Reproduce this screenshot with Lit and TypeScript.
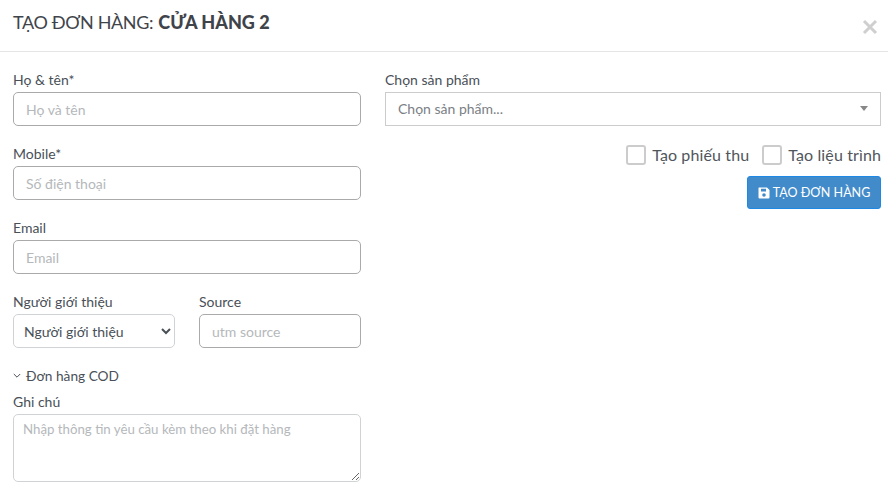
import { LitElement, html, css } from "lit";
import { customElement } from "lit/decorators.js";

@customElement("app-root")
export class AppRoot extends LitElement {
  static styles = css`
    :host {
      display: block;
      width: 888px;
      height: 495px;
      overflow: hidden;
      background: #fff;
      color: #495057;
      font-family: "Lato", "Open Sans", sans-serif;
      font-size: 14px;
    }
    * { box-sizing: border-box; }
    .header {
      height: 52px;
      border-bottom: 1px solid #e5e5e5;
      padding: 10px 10px 0 13px;
      display: flex;
      justify-content: space-between;
      align-items: flex-start;
    }
    .title { font-size: 18px; line-height: 24px; color: #3f444a; letter-spacing: -0.38px; }
    .title b { font-weight: 900; letter-spacing: 0; margin-left: 1px; }
    .close { margin-top: 9px; display: block; }
    .body {
      display: grid;
      grid-template-columns: 348px 496px;
      column-gap: 24px;
      padding: 19px 7px 0 13px;
    }
    .left { display: flex; flex-direction: column; }
    .field { display: flex; flex-direction: column; margin-bottom: 19px; }
    label { display: block; line-height: 18px; height: 21px; color: #495057; }
    input, select, textarea {
      font: inherit;
      width: 100%;
      outline: none;
      background: #fff;
    }
    .input {
      height: 34px;
      border: 1px solid #aaaaaa;
      border-radius: 5px;
      padding: 0 12px;
      color: #495057;
    }
    .input::placeholder, textarea::placeholder { color: #b5b8bb; opacity: 1; }
    .split { display: grid; grid-template-columns: 162px 162px; column-gap: 24px; }
    .split .field { margin-bottom: 0; }
    .select {
      height: 34px;
      border: 1px solid #d0d3d6;
      border-radius: 5px;
      padding: 0 6px;
      color: #495057;
    }
    .cod {
      display: flex;
      align-items: center;
      gap: 5px;
      margin-top: 19px;
      height: 18px;
      line-height: 18px;
      font-size: 13.7px;
    }
    .note-label { margin-top: 8px; }
    .note {
      display: block;
      height: 68px;
      border: 1px solid #d0d3d6;
      border-radius: 5px;
      padding: 5px 9px;
      color: #495057;
      resize: vertical;
      line-height: 18px;
      font-size: 13.25px;
    }
    .right { display: flex; flex-direction: column; }
    .product {
      height: 34px;
      border: 1px solid #ccc;
      padding: 0 12px 1px;
      display: flex;
      align-items: center;
      justify-content: space-between;
      color: #7b8085;
    }
    .caret {
      width: 0; height: 0;
      border-left: 4px solid transparent;
      border-right: 4px solid transparent;
      border-top: 5px solid #888;
    }
    .checks {
      display: flex;
      justify-content: flex-end;
      gap: 13px;
      margin-top: 19px;
    }
    .check { display: flex; align-items: center; gap: 6px; font-size: 16px; line-height: 20px; letter-spacing: 0.12px; color: #50565c; height: 20px; }
    .box { width: 20px; height: 20px; border: 2px solid #ccc; border-radius: 3px; background: #fff; }
    .actions { display: flex; justify-content: flex-end; margin-top: 11px; }
    .btn {
      width: 134px;
      height: 33px;
      border: 1px solid #1e88e5;
      border-radius: 3px;
      background: #428bca;
      color: #fff;
      font: inherit;
      font-size: 12.5px;
      line-height: 16px;
      padding: 0;
      display: flex;
      align-items: center;
      justify-content: center;
      gap: 3px;
    }
  `;

  render() {
    return html`
      <div class="header">
        <div class="title">TẠO ĐƠN HÀNG: <b>CỬA HÀNG 2</b></div>
        <svg class="close" width="16" height="16" viewBox="0 0 16 16" aria-hidden="true">
          <path d="M2 2 L14 14 M14 2 L2 14" stroke="#cfcfcf" stroke-width="3" fill="none"/>
        </svg>
      </div>
      <div class="body">
        <div class="left">
          <div class="field">
            <label>Họ &amp; tên*</label>
            <input class="input" placeholder="Họ và tên" />
          </div>
          <div class="field">
            <label>Mobile*</label>
            <input class="input" placeholder="Số điện thoại" />
          </div>
          <div class="field">
            <label>Email</label>
            <input class="input" placeholder="Email" />
          </div>
          <div class="split">
            <div class="field">
              <label>Người giới thiệu</label>
              <select class="select"><option>Người giới thiệu</option></select>
            </div>
            <div class="field">
              <label>Source</label>
              <input class="input" placeholder="utm source" />
            </div>
          </div>
          <div class="cod">
            <svg width="8" height="6" viewBox="0 0 8 6" aria-hidden="true">
              <path d="M0.8 1 L4 4.2 L7.2 1" stroke="#495057" stroke-width="1" fill="none"/>
            </svg>
            <span>Đơn hàng COD</span>
          </div>
          <label class="note-label">Ghi chú</label>
          <textarea class="note" placeholder="Nhập thông tin yêu cầu kèm theo khi đặt hàng"></textarea>
        </div>
        <div class="right">
          <label>Chọn sản phẩm</label>
          <div class="product">
            <span>Chọn sản phẩm...</span>
            <span class="caret"></span>
          </div>
          <div class="checks">
            <div class="check"><span class="box"></span><span>Tạo phiếu thu</span></div>
            <div class="check"><span class="box"></span><span>Tạo liệu trình</span></div>
          </div>
          <div class="actions">
            <button class="btn">
              <svg width="12" height="12" viewBox="0 0 12 12" aria-hidden="true">
                <path fill="#fff" fill-rule="evenodd" d="M1 0.5 H9 L11.5 3 V10.5 A1 1 0 0 1 10.5 11.5 H1.5 A1 1 0 0 1 0.5 10.5 V1 A.5 .5 0 0 1 1 .5 Z M3 1.8 V4.4 H8 V1.8 Z M6 6.2 A1.8 1.8 0 1 0 6 9.8 A1.8 1.8 0 1 0 6 6.2 Z"/>
              </svg>
              <span>TẠO ĐƠN HÀNG</span>
            </button>
          </div>
        </div>
      </div>
    `;
  }
}
